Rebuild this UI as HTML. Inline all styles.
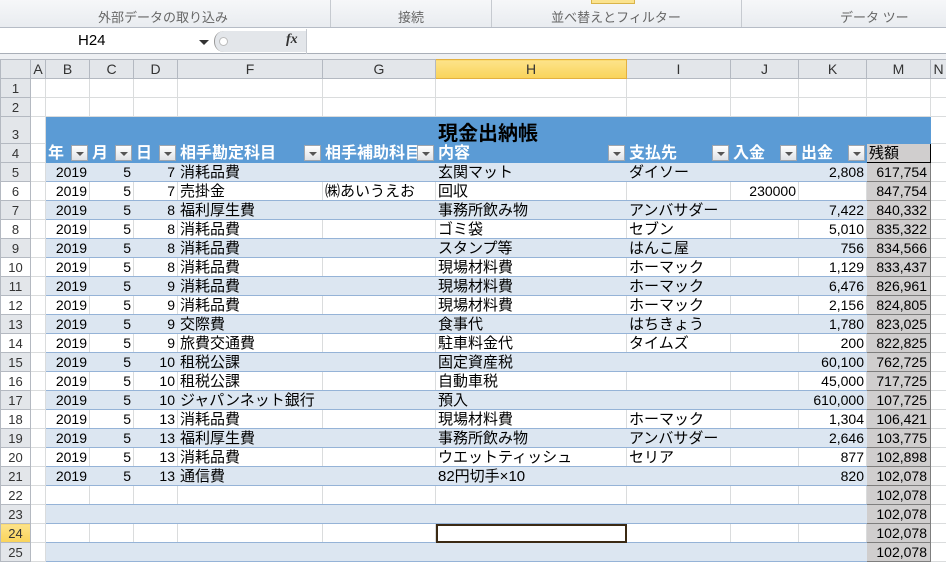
<!DOCTYPE html>
<html><head><meta charset="utf-8"><style>
*{margin:0;padding:0;box-sizing:border-box}
body{width:946px;height:552px;overflow:hidden;background:#fff;font-family:"Liberation Sans","Noto Sans CJK JP",sans-serif;position:relative}
#rib{position:absolute;left:0;top:0;width:946px;height:28px;background:linear-gradient(#f6f7f9,#e9ecf0);border-bottom:1px solid #b6bcc6;color:#666;font-size:13px}
#rib div{position:absolute;top:7px;text-align:center}
.sep{position:absolute;top:0;width:1px;height:27px;background:#c6cad0}
#fb{position:absolute;left:0;top:29px;width:946px;height:25px;background:#fff;border-bottom:1px solid #a9afb8}
#gap{position:absolute;left:0;top:54px;width:946px;height:5px;background:#eef0f3}
table{position:absolute;left:0;top:59px;border-collapse:collapse;table-layout:fixed;width:946px}
td{border:1px solid #dadcdd;font-size:14px;white-space:nowrap;overflow:hidden;padding:0 2px;height:19px;line-height:17px;color:#000}
tr.ch td{background:#e3e6ea;color:#333;text-align:center;border-color:#b4b9c1;font-size:14px}
td.h{background:#e3e6ea;color:#333;text-align:center;border-color:#b4b9c1;font-size:13px}
tr.b td{background:#dce6f1;border-left-color:#dce6f1;border-right-color:#dce6f1}
tr.b td.h{background:#e3e6ea;border-color:#b4b9c1}
tr.b td.a,tr.w td.a{background:#fff;border-color:#dadcdd}
tr.b td,tr.w td{border-bottom-color:#95b3d7;border-top-color:#95b3d7}
td.h{border-bottom-color:#b4b9c1 !important;border-top-color:#b4b9c1 !important}
td.a{border-bottom-color:#dadcdd !important;border-top-color:#dadcdd !important}
td.r{text-align:right}
td.m{background:#d0cece !important;border:1px solid #7f7f7f !important;text-align:right;padding-right:3px}
td.j{font-size:15px}
tr.t td.bl{background:#5b9bd5;border-color:#5b9bd5}
tr.hd td.bl{background:#5b9bd5;border-color:#5b9bd5;color:#fff;font-weight:bold;font-size:16px;position:relative}
.dd{position:absolute;right:1px;top:1px;width:17px;height:16px;background:linear-gradient(#fff,#dfe2e6);border:1px solid #a0a6ae}
.dd:after{content:"";position:absolute;left:4px;top:6px;border-left:4px solid transparent;border-right:4px solid transparent;border-top:4px solid #555}
tr.w td{background:#fff}
</style></head><body>
<div id="rib">
<div style="left:0;width:326px">外部データの取り込み</div><span class="sep" style="left:330px"></span>
<div style="left:330px;width:162px">接続</div><span class="sep" style="left:491px"></span>
<div style="left:491px;width:250px">並べ替えとフィルター</div><span class="sep" style="left:741px"></span>
<div style="left:840px;width:120px;text-align:left">データ ツー</div>
<span style="position:absolute;left:591px;top:0;width:44px;height:4px;background:#fbe38f;border:1px solid #d9b44a;border-top:none"></span>
</div>
<div id="fb">
<div style="position:absolute;left:78px;top:3px;font-size:15px">H24</div>
<div style="position:absolute;left:199px;top:11px;border-left:5px solid transparent;border-right:5px solid transparent;border-top:5px solid #333"></div>
<div style="position:absolute;left:214px;top:2px;width:92px;height:21px;background:#e3e6ea;border-radius:10px 0 0 10px;border-left:1px solid #999"></div>
<div style="position:absolute;left:219px;top:8px;width:9px;height:9px;border-radius:5px;background:#fff;border:1px solid #bbb"></div>
<div style="position:absolute;left:286px;top:3px;font:italic bold 14px 'Liberation Serif',serif;color:#333">fx</div>
<div style="position:absolute;left:306px;top:0;width:1px;height:25px;background:#c6cad0"></div>
</div>
<div id="gap"></div>
<table>
<colgroup><col style="width:30px"><col style="width:15px"><col style="width:44px"><col style="width:44px"><col style="width:44px"><col style="width:145px"><col style="width:113px"><col style="width:191px"><col style="width:104px"><col style="width:68px"><col style="width:68px"><col style="width:64px"><col style="width:16px"></colgroup>
<tr class="ch"><td style="background:#e3e6ea"></td><td>A</td><td>B</td><td>C</td><td>D</td><td>F</td><td>G</td><td style="background:linear-gradient(#fde38a,#f9d35a);border-color:#e3b040">H</td><td>I</td><td>J</td><td>K</td><td>M</td><td>N</td></tr>
<tr><td class="h">1</td><td></td><td></td><td></td><td></td><td></td><td></td><td></td><td></td><td></td><td></td><td></td><td></td></tr>
<tr><td class="h">2</td><td></td><td></td><td></td><td></td><td></td><td></td><td></td><td></td><td></td><td></td><td></td><td></td></tr>
<tr class="t" style="height:27px"><td class="h" style="height:27px;vertical-align:bottom">3</td><td></td><td class="bl" colspan="10" style="text-align:center;font-weight:bold;font-size:20px;vertical-align:bottom">現金出納帳</td><td></td></tr>
<tr class="hd"><td class="h">4</td><td></td><td class="bl">年<span class="dd"></span></td><td class="bl">月<span class="dd"></span></td><td class="bl">日<span class="dd"></span></td><td class="bl">相手勘定科目<span class="dd"></span></td><td class="bl">相手補助科目<span class="dd"></span></td><td class="bl">内容<span class="dd"></span></td><td class="bl">支払先<span class="dd"></span></td><td class="bl">入金<span class="dd"></span></td><td class="bl">出金<span class="dd"></span></td><td class="m" style="text-align:left;border-color:#000 !important;font-size:15px">残額</td><td></td></tr>
<tr class="b"><td class="h">5</td><td class="a"></td><td class="r">2019</td><td class="r">5</td><td class="r">7</td><td class="j">消耗品費</td><td></td><td class="j">玄関マット</td><td class="j">ダイソー</td><td></td><td class="r">2,808</td><td class="m">617,754</td><td class="a"></td></tr>
<tr class="w"><td class="h">6</td><td class="a"></td><td class="r">2019</td><td class="r">5</td><td class="r">7</td><td class="j">売掛金</td><td class="j">㈱あいうえお</td><td class="j">回収</td><td></td><td class="r">230000</td><td></td><td class="m">847,754</td><td class="a"></td></tr>
<tr class="b"><td class="h">7</td><td class="a"></td><td class="r">2019</td><td class="r">5</td><td class="r">8</td><td class="j">福利厚生費</td><td></td><td class="j">事務所飲み物</td><td class="j">アンバサダー</td><td></td><td class="r">7,422</td><td class="m">840,332</td><td class="a"></td></tr>
<tr class="w"><td class="h">8</td><td class="a"></td><td class="r">2019</td><td class="r">5</td><td class="r">8</td><td class="j">消耗品費</td><td></td><td class="j">ゴミ袋</td><td class="j">セブン</td><td></td><td class="r">5,010</td><td class="m">835,322</td><td class="a"></td></tr>
<tr class="b"><td class="h">9</td><td class="a"></td><td class="r">2019</td><td class="r">5</td><td class="r">8</td><td class="j">消耗品費</td><td></td><td class="j">スタンプ等</td><td class="j">はんこ屋</td><td></td><td class="r">756</td><td class="m">834,566</td><td class="a"></td></tr>
<tr class="w"><td class="h">10</td><td class="a"></td><td class="r">2019</td><td class="r">5</td><td class="r">8</td><td class="j">消耗品費</td><td></td><td class="j">現場材料費</td><td class="j">ホーマック</td><td></td><td class="r">1,129</td><td class="m">833,437</td><td class="a"></td></tr>
<tr class="b"><td class="h">11</td><td class="a"></td><td class="r">2019</td><td class="r">5</td><td class="r">9</td><td class="j">消耗品費</td><td></td><td class="j">現場材料費</td><td class="j">ホーマック</td><td></td><td class="r">6,476</td><td class="m">826,961</td><td class="a"></td></tr>
<tr class="w"><td class="h">12</td><td class="a"></td><td class="r">2019</td><td class="r">5</td><td class="r">9</td><td class="j">消耗品費</td><td></td><td class="j">現場材料費</td><td class="j">ホーマック</td><td></td><td class="r">2,156</td><td class="m">824,805</td><td class="a"></td></tr>
<tr class="b"><td class="h">13</td><td class="a"></td><td class="r">2019</td><td class="r">5</td><td class="r">9</td><td class="j">交際費</td><td></td><td class="j">食事代</td><td class="j">はちきょう</td><td></td><td class="r">1,780</td><td class="m">823,025</td><td class="a"></td></tr>
<tr class="w"><td class="h">14</td><td class="a"></td><td class="r">2019</td><td class="r">5</td><td class="r">9</td><td class="j">旅費交通費</td><td></td><td class="j">駐車料金代</td><td class="j">タイムズ</td><td></td><td class="r">200</td><td class="m">822,825</td><td class="a"></td></tr>
<tr class="b"><td class="h">15</td><td class="a"></td><td class="r">2019</td><td class="r">5</td><td class="r">10</td><td class="j">租税公課</td><td></td><td class="j">固定資産税</td><td></td><td></td><td class="r">60,100</td><td class="m">762,725</td><td class="a"></td></tr>
<tr class="w"><td class="h">16</td><td class="a"></td><td class="r">2019</td><td class="r">5</td><td class="r">10</td><td class="j">租税公課</td><td></td><td class="j">自動車税</td><td></td><td></td><td class="r">45,000</td><td class="m">717,725</td><td class="a"></td></tr>
<tr class="b"><td class="h">17</td><td class="a"></td><td class="r">2019</td><td class="r">5</td><td class="r">10</td><td class="j">ジャパンネット銀行</td><td></td><td class="j">預入</td><td></td><td></td><td class="r">610,000</td><td class="m">107,725</td><td class="a"></td></tr>
<tr class="w"><td class="h">18</td><td class="a"></td><td class="r">2019</td><td class="r">5</td><td class="r">13</td><td class="j">消耗品費</td><td></td><td class="j">現場材料費</td><td class="j">ホーマック</td><td></td><td class="r">1,304</td><td class="m">106,421</td><td class="a"></td></tr>
<tr class="b"><td class="h">19</td><td class="a"></td><td class="r">2019</td><td class="r">5</td><td class="r">13</td><td class="j">福利厚生費</td><td></td><td class="j">事務所飲み物</td><td class="j">アンバサダー</td><td></td><td class="r">2,646</td><td class="m">103,775</td><td class="a"></td></tr>
<tr class="w"><td class="h">20</td><td class="a"></td><td class="r">2019</td><td class="r">5</td><td class="r">13</td><td class="j">消耗品費</td><td></td><td class="j">ウエットティッシュ</td><td class="j">セリア</td><td></td><td class="r">877</td><td class="m">102,898</td><td class="a"></td></tr>
<tr class="b"><td class="h">21</td><td class="a"></td><td class="r">2019</td><td class="r">5</td><td class="r">13</td><td class="j">通信費</td><td></td><td class="j">82円切手×10</td><td></td><td></td><td class="r">820</td><td class="m">102,078</td><td class="a"></td></tr>
<tr class="w"><td class="h">22</td><td class="a"></td><td></td><td></td><td></td><td></td><td></td><td></td><td></td><td></td><td></td><td class="m">102,078</td><td class="a"></td></tr>
<tr class="b"><td class="h">23</td><td class="a"></td><td></td><td></td><td></td><td></td><td></td><td></td><td></td><td></td><td></td><td class="m">102,078</td><td class="a"></td></tr>
<tr class="w"><td class="h" style="background:linear-gradient(#fde38a,#f9d35a);color:#333">24</td><td class="a"></td><td></td><td></td><td></td><td></td><td></td><td style="outline:2px solid #3b2a14;outline-offset:-2px"></td><td></td><td></td><td></td><td class="m">102,078</td><td class="a"></td></tr>
<tr class="b"><td class="h">25</td><td class="a"></td><td></td><td></td><td></td><td></td><td></td><td></td><td></td><td></td><td></td><td class="m">102,078</td><td class="a"></td></tr>
</table>
</body></html>
